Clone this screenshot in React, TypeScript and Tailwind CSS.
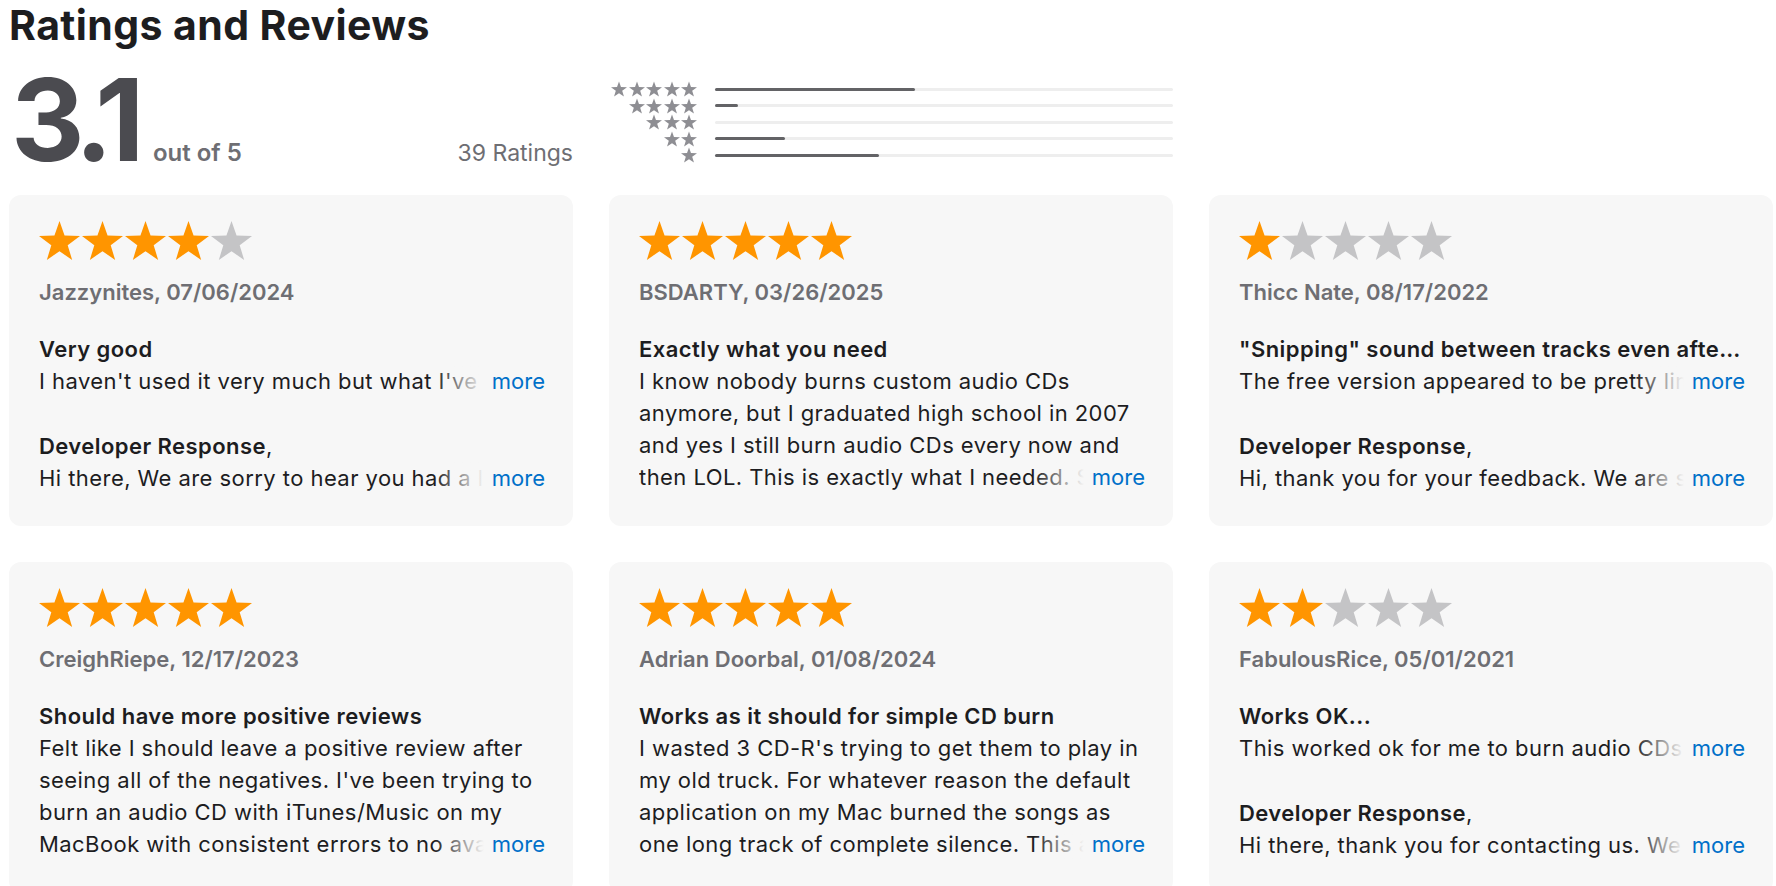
const STAR_POINTS =
  "50,2.45 62.34,38.03 100,38.78 69.97,61.51 80.9,97.55 50,76.02 19.1,97.55 30.03,61.51 0,38.78 37.66,38.03";

function Star({ className, fill }: { className: string; fill: string }) {
  return (
    <svg viewBox="0 0 100 100" className={className} aria-hidden="true">
      <polygon points={STAR_POINTS} fill={fill} />
    </svg>
  );
}

const histogram = [
  { stars: 5, count: 17 },
  { stars: 4, count: 2 },
  { stars: 3, count: 0 },
  { stars: 2, count: 6 },
  { stars: 1, count: 14 },
];
const total = 39;

type Review = {
  rating: number;
  author: string;
  date: string;
  title: string;
  body: string[];
  response?: string;
};

// lines are kept as shown in the store listing (clamped, with a "more" link)
const reviews: Review[] = [
  {
    rating: 4,
    author: "Jazzynites",
    date: "07/06/2024",
    title: "Very good",
    body: ["I haven't used it very much but what I've used it for it has worked well so far."],
    response: "Hi there, We are sorry to hear you had a less than perfect experience with the app.",
  },
  {
    rating: 5,
    author: "BSDARTY",
    date: "03/26/2025",
    title: "Exactly what you need",
    body: [
      "I know nobody burns custom audio CDs",
      "anymore, but I graduated high school in 2007",
      "and yes I still burn audio CDs every now and",
      "then LOL. This is exactly what I needed. Simple and it just works.",
    ],
  },
  {
    rating: 1,
    author: "Thicc Nate",
    date: "08/17/2022",
    title: "\"Snipping\" sound between tracks even after purchasing",
    body: ["The free version appeared to be pretty limited so I paid for the full version."],
    response: "Hi, thank you for your feedback. We are sorry for the trouble.",
  },
  {
    rating: 5,
    author: "CreighRiepe",
    date: "12/17/2023",
    title: "Should have more positive reviews",
    body: [
      "Felt like I should leave a positive review after",
      "seeing all of the negatives. I've been trying to",
      "burn an audio CD with iTunes/Music on my",
      "MacBook with consistent errors to no avail for weeks.",
    ],
  },
  {
    rating: 5,
    author: "Adrian Doorbal",
    date: "01/08/2024",
    title: "Works as it should for simple CD burn",
    body: [
      "I wasted 3 CD-R's trying to get them to play in",
      "my old truck. For whatever reason the default",
      "application on my Mac burned the songs as",
      "one long track of complete silence. This app fixed it.",
    ],
  },
  {
    rating: 2,
    author: "FabulousRice",
    date: "05/01/2021",
    title: "Works OK...",
    body: ["This worked ok for me to burn audio CDs but it kept crashing."],
    response: "Hi there, thank you for contacting us. We would love to help.",
  },
];

function Clamped({ lines }: { lines: string[] }) {
  const height = lines.length === 1 ? "h-[32px]" : "h-[128px]";
  return (
    <div
      className={`relative overflow-hidden ${height} text-[22px] leading-[32px] tracking-[0.02em] text-[#1d1d1f]`}
    >
      {lines.map((line, i) => (
        <p key={i} className="whitespace-nowrap">
          {line}
        </p>
      ))}
      <div className="absolute bottom-0 right-0 flex">
        <span className="w-[50px] bg-linear-to-r from-[#f7f7f7]/0 to-[#f7f7f7]" />
        <span className="bg-[#f7f7f7] pl-[8px] tracking-normal text-[#0070c9]">more</span>
      </div>
    </div>
  );
}

function ReviewCard({ review }: { review: Review }) {
  return (
    <div className="h-[331px] rounded-[12px] bg-[#f7f7f7] pl-[30px] pr-[28px] pt-[25px]">
      <div className="flex gap-[2px]">
        {[1, 2, 3, 4, 5].map((i) => (
          <Star key={i} className="h-[41px] w-[41px]" fill={i <= review.rating ? "#ff9500" : "#c4c4c6"} />
        ))}
      </div>
      <p className="mt-[15px] text-[22px] font-semibold leading-[32px] text-[#6e6e73]">
        {review.author}, {review.date}
      </p>
      <h3 className="mt-[25px] truncate pr-[2px] text-[22px] font-semibold leading-[32px] tracking-[0.02em] text-[#1d1d1f]">
        {review.title}
      </h3>
      <Clamped lines={review.body} />
      {review.response && (
        <div className="mt-[33px]">
          <h4 className="text-[22px] leading-[32px] tracking-[0.02em] text-[#1d1d1f]">
            <span className="font-semibold">Developer Response</span>,
          </h4>
          <Clamped lines={[review.response]} />
        </div>
      )}
    </div>
  );
}

export default function App() {
  return (
    <div className="h-[886px] overflow-hidden bg-white pl-[9px] font-[Inter,sans-serif] text-[#1d1d1f]">
      <h2 className="pt-[1px] text-[41px] font-bold leading-[48px] tracking-[0.01em]">Ratings and Reviews</h2>

      <div className="mt-[14px] grid w-[1764px] grid-cols-3 gap-x-[36px]">
        <div className="flex items-baseline">
          <span className="pl-[2px] text-[114px] font-bold leading-none tracking-[-0.065em] text-[#4b4b50]">
            3.1
          </span>
          <span className="ml-[16px] text-[24px] font-semibold text-[#6e6e73]">out of 5</span>
          <span className="ml-auto text-[23px] text-[#6e6e73]">{total} Ratings</span>
        </div>

        <div className="mt-[18px] flex gap-[18px]">
          <div className="flex w-[88px] flex-col items-end">
            {histogram.map((row) => (
              <div key={row.stars} className="flex h-[16.5px] items-center gap-[1.5px]">
                {Array.from({ length: row.stars }).map((_, i) => (
                  <Star key={i} className="h-[16px] w-[16px]" fill="#8e8e93" />
                ))}
              </div>
            ))}
          </div>
          <div className="flex flex-1 flex-col">
            {histogram.map((row) => (
              <div key={row.stars} className="flex h-[16.5px] items-center">
                <div className="h-[3px] w-full rounded-full bg-[#eeeeee]">
                  <div
                    className="h-[3px] rounded-full bg-[#636366]"
                    style={{ width: `${(row.count / total) * 100}%` }}
                  />
                </div>
              </div>
            ))}
          </div>
        </div>
        <div />
      </div>

      <div className="mt-[18px] grid w-[1764px] grid-cols-3 gap-x-[36px] gap-y-[36px]">
        {reviews.map((r) => (
          <ReviewCard key={r.author} review={r} />
        ))}
      </div>
    </div>
  );
}
